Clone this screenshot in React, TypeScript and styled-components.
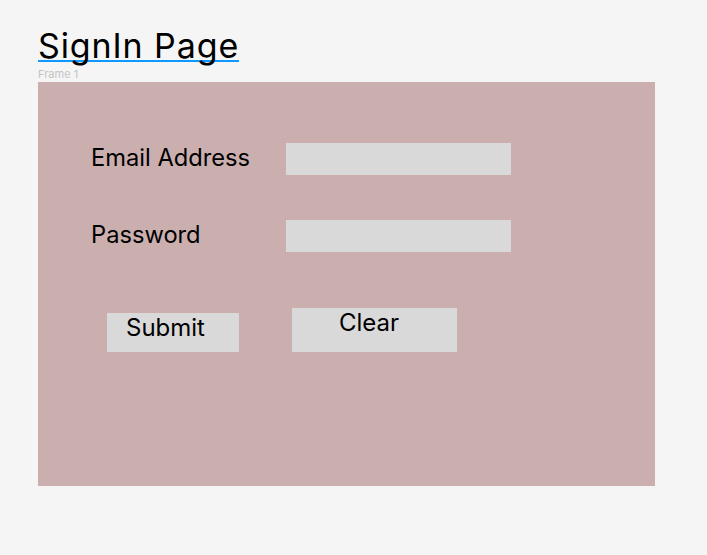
import React from 'react'
import styled, { createGlobalStyle } from 'styled-components'

const GlobalStyle = createGlobalStyle`
  html, body {
    margin: 0;
    padding: 0;
    background: #f5f5f5;
    font-family: Inter, "Noto Sans", sans-serif;
  }
`

export default function App() {
  return (
    <>
      <GlobalStyle />
      <Page>
        <Title>SignIn Page</Title>
        <FrameLabel>Frame 1</FrameLabel>
        <Frame>
          <Row>
            <Label>Email Address</Label>
            <Field type="email" />
          </Row>
          <Row>
            <Label>Password</Label>
            <Field type="password" />
          </Row>
          <Buttons>
            <SubmitButton>Submit</SubmitButton>
            <ClearButton>Clear</ClearButton>
          </Buttons>
        </Frame>
      </Page>
    </>
  )
}

const Page = styled.div`
  padding: 26px 0 0 38px;
  width: 617px;
`

const Title = styled.h1`
  margin: 0;
  display: inline-block;
  font-weight: 400;
  font-size: 34px;
  letter-spacing: 0.9px;
  line-height: 40px;
  height: 34px;
  color: #000;
  border-bottom: 2px solid #0d99ff;
`

const FrameLabel = styled.div`
  font-size: 11px;
  line-height: 13px;
  height: 13px;
  margin-top: 6px;
  color: #c4c4c4;
`

const Frame = styled.div`
  margin-top: 1px;
  height: 404px;
  background: #cbafaf;
  padding: 61px 0 0 53px;
  box-sizing: border-box;
  display: flex;
  flex-direction: column;
`

const Row = styled.div`
  display: flex;
  align-items: center;
  height: 32px;
  margin-bottom: 45px;
`

const Label = styled.span`
  width: 195px;
  font-size: 23.7px;
  padding-bottom: 4px;
  color: #000;
`

const Field = styled.input`
  width: 225px;
  height: 32px;
  border: none;
  outline: none;
  padding: 0;
  background: #d9d9d9;
`

const Buttons = styled.div`
  display: flex;
  align-items: flex-end;
  gap: 53px;
  margin: 11px 0 0 16px;
`

const SubmitButton = styled.button`
  width: 132px;
  height: 39px;
  border: none;
  background: #d9d9d9;
  font-family: inherit;
  font-size: 24px;
  line-height: 29px;
  color: #000;
  padding: 0 0 0 19px;
  display: flex;
  align-items: flex-start;
`

const ClearButton = styled.button`
  width: 165px;
  height: 44px;
  border: none;
  background: #d9d9d9;
  font-family: inherit;
  font-size: 24px;
  line-height: 29px;
  color: #000;
  padding: 0 0 0 47px;
  display: flex;
  align-items: flex-start;
`
